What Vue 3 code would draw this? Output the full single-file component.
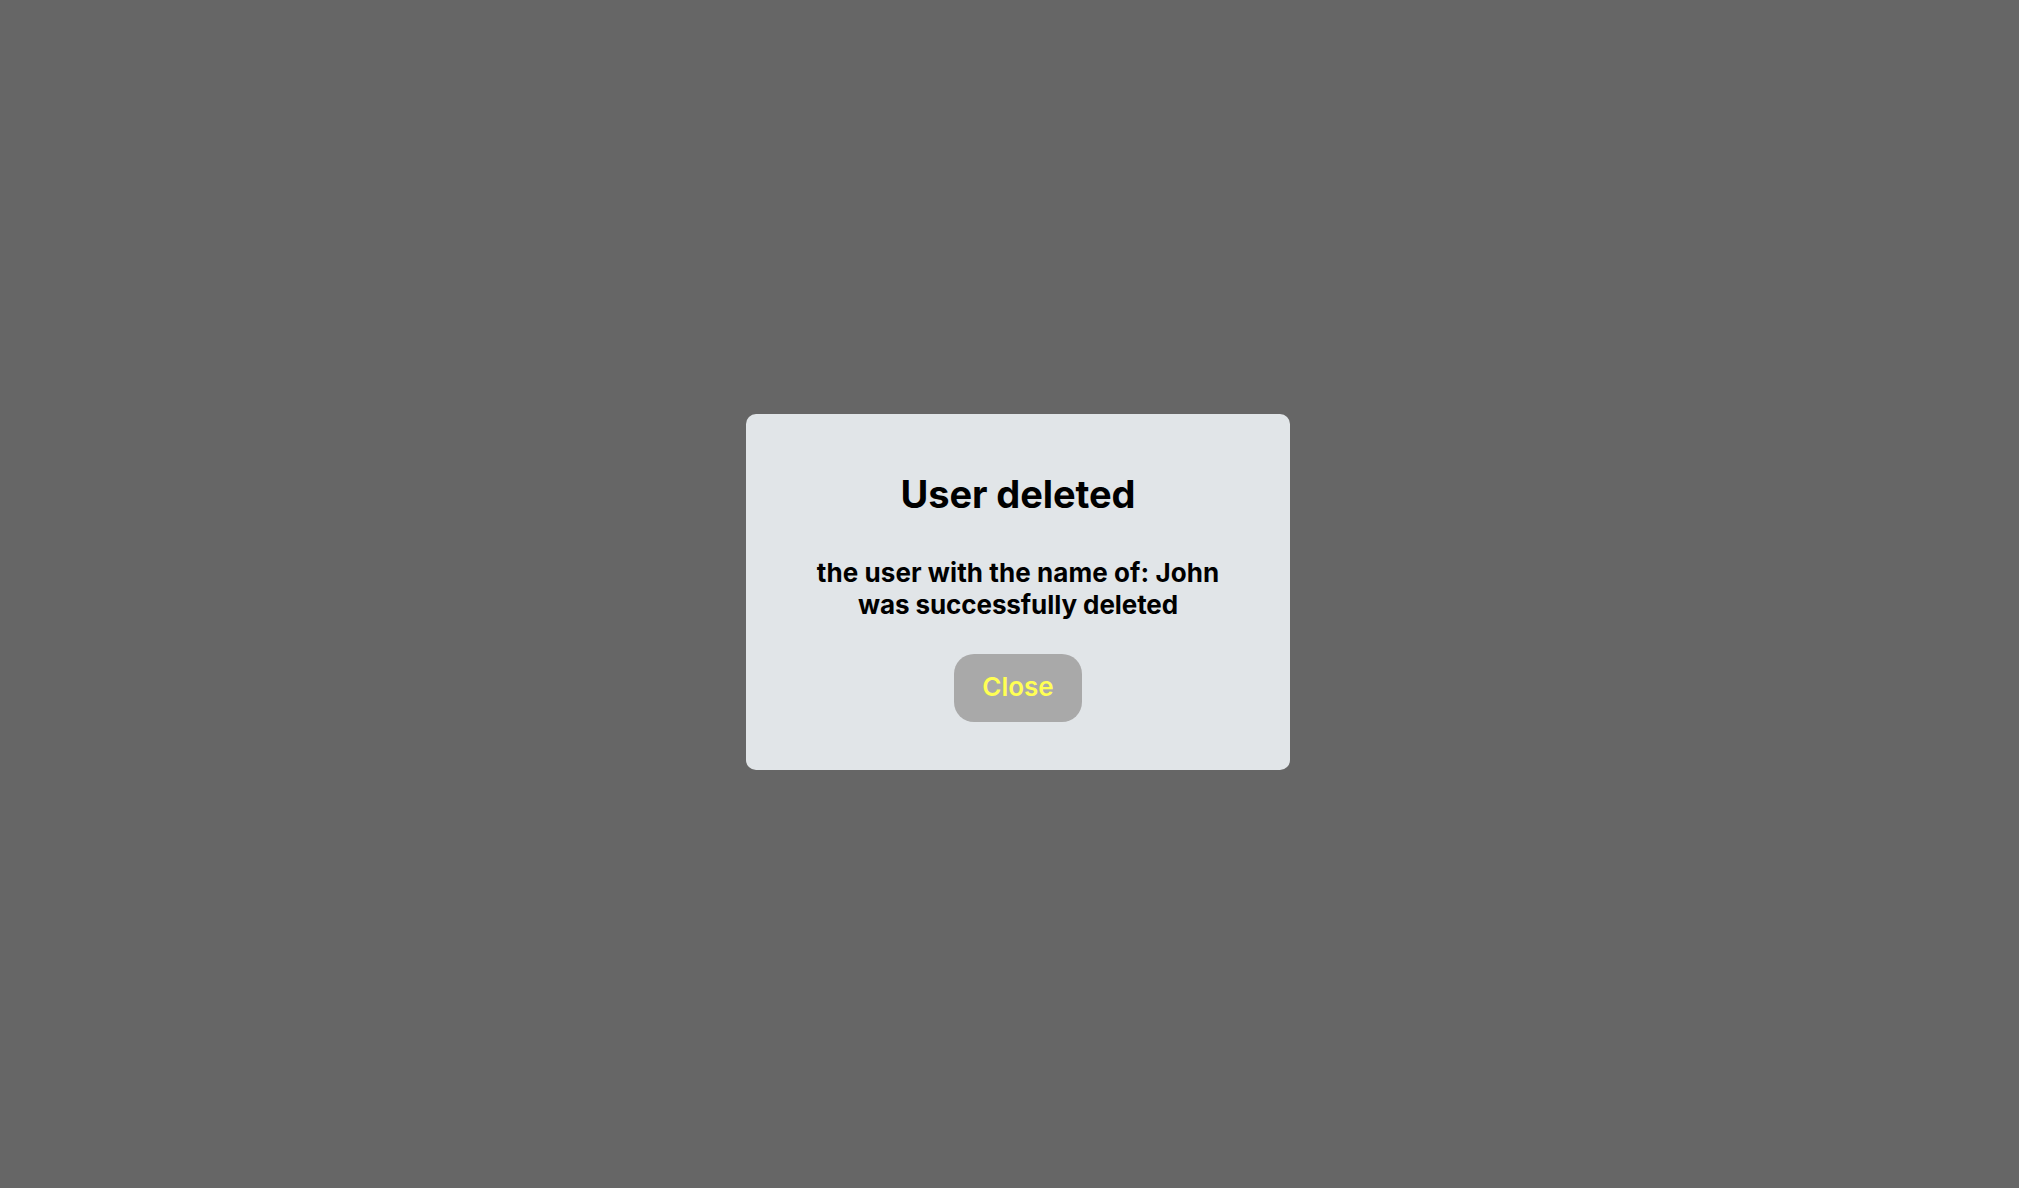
<script setup>
import { ref } from 'vue'

const open = ref(true)
const name = 'John'
</script>

<template>
  <main class="overlay">
    <section v-if="open" class="modal" role="dialog" aria-modal="true">
      <h2 class="title">User deleted</h2>
      <p class="message"><span class="first">the user with the name of: {{ name }}</span><br /><span class="second">was successfully deleted</span></p>
      <button class="close" type="button" @click="open = false">Close</button>
    </section>
  </main>
</template>

<style>
body {
  margin: 0;
  background: #666;
}
</style>

<style scoped>
.overlay {
  min-height: 100vh;
  box-sizing: border-box;
  padding: 414px 0 0 17px;
  display: flex;
  justify-content: center;
  align-items: flex-start;
  background: #666;
  font-family: Inter, "Liberation Sans", sans-serif;
}

.modal {
  box-sizing: border-box;
  width: 544px;
  height: 356px;
  padding-top: 56px;
  display: flex;
  flex-direction: column;
  align-items: center;
  border-radius: 10px;
  background: #e1e5e8;
  color: #000;
  text-align: center;
}

.title {
  margin: 0;
  font-size: 38px;
  line-height: 48px;
  font-weight: 700;
  letter-spacing: -0.08px;
}

.message {
  margin: 39px 0 0;
  font-size: 26px;
  line-height: 32px;
  font-weight: 700;
  white-space: nowrap;
}

.first {
  letter-spacing: 0.07px;
}

.second {
  letter-spacing: -0.08px;
}

.close {
  width: 128px;
  height: 68px;
  margin-top: 33px;
  padding: 0 0 2px;
  border: 0;
  border-radius: 20px;
  background: #a9a9a9;
  color: #ffff54;
  font: 600 26px/32px Inter, "Liberation Sans", sans-serif;
}
</style>
